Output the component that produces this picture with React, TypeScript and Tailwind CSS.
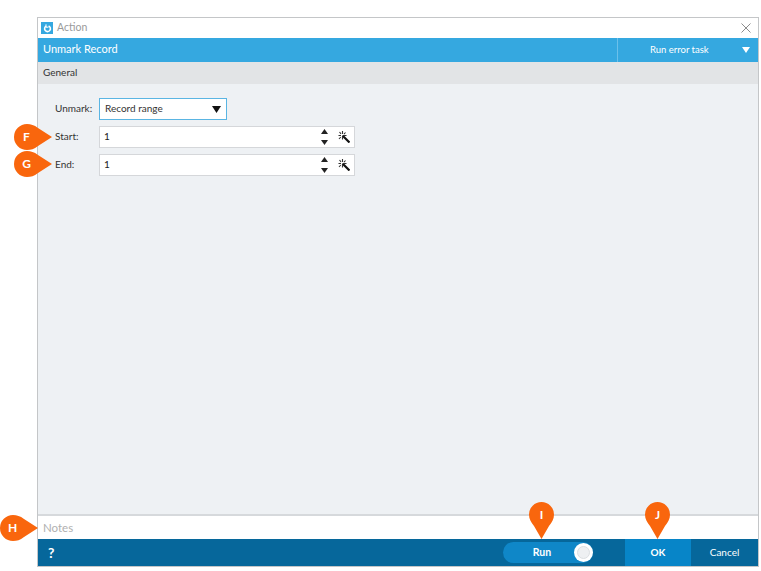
import React from "react";

const Wand = () => (
  <svg width="12" height="12" viewBox="0 0 12 12" className="block">
    <path d="M4.5 4.5 L11.5 11.5" stroke="#111" strokeWidth="2.2" />
    <path d="M4.5 0V3 M7.5 1.5L6 3.2 M0.5 4.5H3 M1.5 1L3 2.8 M6 4.5H8.5 M1 8L2.8 6 M4.5 6V8.5" stroke="#333" strokeWidth="1.1" fill="none" />
  </svg>
);

const Spin = () => (
  <div className="flex flex-col items-center gap-[6px]">
    <svg width="7" height="5" viewBox="0 0 7 5" className="block"><path d="M3.5 0L7 5H0Z" fill="#222" /></svg>
    <svg width="7" height="5" viewBox="0 0 7 5" className="block"><path d="M0 0H7L3.5 5Z" fill="#222" /></svg>
  </div>
);

const NumRow = ({ label }: { label: string }) => (
  <div className="flex items-center h-[22px]">
    <div className="w-[44px] text-[10px] text-[#333] pb-[2px]">{label}</div>
    <div className="w-[256px] h-[22px] bg-white border border-[#d5d7da] flex items-center">
      <span className="pl-[4px] text-[10px] text-[#222] flex-1 pb-[2px]">1</span>
      <div className="mr-[10px]"><Spin /></div>
      <div className="mr-[4px]"><Wand /></div>
    </div>
  </div>
);

const PinH = ({ letter, cls }: { letter: string; cls: string }) => (
  <div className={`absolute ${cls}`}>
    <svg width="38" height="26" viewBox="0 0 38 26" className="block">
      <path d="M13 0C17 0 20 1 24 4L38 13L24 22C20 25 17 26 13 26A13 13 0 0 1 13 0Z" fill="#f9660d" />
    </svg>
    <span className="absolute left-0 top-0 w-[25px] h-[25px] flex items-center justify-center text-white text-[12px] font-bold">{letter}</span>
  </div>
);

const PinV = ({ letter, cls }: { letter: string; cls: string }) => (
  <div className={`absolute ${cls}`}>
    <svg width="25" height="37" viewBox="0 0 25 37" className="block">
      <path d="M12.5 0A12.5 12.5 0 0 1 25 12.5C25 17 23 20 20 24L12.5 37L5 24C2 20 0 17 0 12.5A12.5 12.5 0 0 1 12.5 0Z" fill="#f9660d" />
    </svg>
    <span className="absolute left-0 top-0 w-[25px] h-[25px] flex items-center justify-center text-white text-[12px] font-bold">{letter}</span>
  </div>
);

export default function App() {
  return (
    <div className="relative w-[761px] h-[571px] bg-white font-['Lato',sans-serif] overflow-hidden">
      <div className="pt-[17px] pl-[37px]">
        <div className="w-[722px] h-[550px] border border-[#c4c6c8] flex flex-col">
          <div className="h-[20px] flex items-center bg-white">
            <div className="ml-[3px] w-[12px] h-[12px] bg-[#35a8e0] flex items-center justify-center">
              <svg width="9" height="9" viewBox="0 0 9 9" className="block">
                <path d="M3.2 2.1A2.9 2.9 0 1 0 5.6 2" fill="none" stroke="#fff" strokeWidth="1.6" />
                <path d="M3 0.3V3.2H5.5" stroke="#fff" strokeWidth="1" fill="none" />
              </svg>
            </div>
            <span className="ml-[4px] text-[10.5px] text-[#9a9a9a]">Action</span>
            <div className="ml-auto mr-[7px]">
              <svg width="10" height="10" viewBox="0 0 10 10" className="block">
                <path d="M0.5 0.5L9.5 9.5M9.5 0.5L0.5 9.5" stroke="#8c8c8c" strokeWidth="1" />
              </svg>
            </div>
          </div>

          <div className="h-[24px] bg-[#35a8e0] flex items-center text-white">
            <span className="pl-[5px] text-[11px] flex-1 pb-[2px]">Unmark Record</span>
            <div className="w-[141px] h-full border-l border-[#6cc0ea] flex items-center">
              <span className="ml-[32px] text-[9.5px]">Run error task</span>
              <svg width="8" height="6" viewBox="0 0 8 6" className="block ml-auto mr-[8px]"><path d="M0 0H8L4 6Z" fill="#fff" /></svg>
            </div>
          </div>

          <div className="h-[22px] bg-[#e2e4e6] flex items-center pl-[5px] text-[10px] text-[#333] pb-[1px]">General</div>

          <div className="flex-1 bg-[#eef1f4] pt-[14px] pl-[17px] flex flex-col gap-[6px]">
            <div className="flex items-center h-[22px]">
              <div className="w-[44px] text-[10px] text-[#333] pb-[2px]">Unmark:</div>
              <div className="w-[128px] h-[22px] bg-white border border-[#5ab5e3] flex items-center">
                <span className="pl-[5px] text-[10px] text-[#333] flex-1 pb-[2px]">Record range</span>
                <svg width="9" height="7" viewBox="0 0 9 7" className="block mr-[5px]"><path d="M0 0H9L4.5 7Z" fill="#111" /></svg>
              </div>
            </div>
            <NumRow label="Start:" />
            <NumRow label="End:" />
          </div>

          <div className="h-[25px] bg-white border-t-2 border-[#d6d9dc] flex items-center pl-[5px] text-[11.5px] text-[#b0b0b0]">Notes</div>

          <div className="h-[27px] bg-[#06679b] flex items-center text-white">
            <span className="ml-[10px] text-[14px] font-bold">?</span>
            <div className="ml-auto w-[90px] h-[21px] rounded-full bg-[#0f87c8] flex items-center">
              <span className="flex-1 text-center pl-[7px] text-[10.5px] font-bold">Run</span>
              <div className="w-[19px] h-[19px] rounded-full bg-white flex items-center justify-center">
                <div className="w-[13px] h-[13px] rounded-full bg-[#eef0f2] border border-[#dcdfe2]" />
              </div>
            </div>
            <div className="ml-[32px] w-[66px] h-full bg-[#0785c8] flex items-center justify-center text-[10px] font-bold">OK</div>
            <div className="w-[67px] h-full flex items-center justify-center text-[10px]">Cancel</div>
          </div>
        </div>
      </div>

      <PinH letter="F" cls="left-[14px] top-[124px]" />
      <PinH letter="G" cls="left-[14px] top-[151px]" />
      <PinH letter="H" cls="left-0 top-[515px]" />
      <PinV letter="I" cls="left-[529px] top-[502px]" />
      <PinV letter="J" cls="left-[645px] top-[502px]" />
    </div>
  );
}
